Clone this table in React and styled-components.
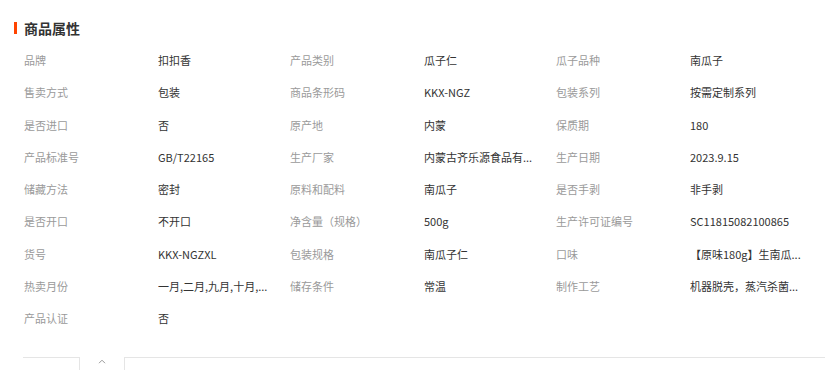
import { Fragment } from 'react';
import styled, { createGlobalStyle } from 'styled-components';

const GlobalStyle = createGlobalStyle`
  body {
    margin: 0;
    background: #fff;
    font-family: "Microsoft YaHei", "Noto Sans CJK SC", sans-serif;
  }
`;

const Section = styled.section`
  width: 825px;
  height: 370px;
  overflow: hidden;
`;

const Header = styled.div`
  display: flex;
  align-items: center;
  height: 24px;
  margin-top: 16px;
  padding-left: 14px;
`;

const Bar = styled.span`
  width: 3px;
  height: 12px;
  background-color: #ff4400;
  margin-right: 7px;
`;

const Title = styled.h3`
  margin: 0;
  font-size: 14px;
  font-weight: 700;
  color: #333;
`;

const Grid = styled.div`
  display: grid;
  grid-template-columns: repeat(3, 134px 132px);
  grid-auto-rows: 32.25px;
  align-items: center;
  margin-top: 4px;
  padding-left: 24px;
  font-size: 11px;
`;

const Label = styled.div`
  color: #9a9a9a;
  white-space: nowrap;
`;

const Value = styled.div`
  color: #333;
  white-space: nowrap;
  overflow: hidden;
`;

const TabBar = styled.div`
  display: flex;
  height: 13px;
  margin-top: 23px;
  padding-left: 23px;
`;

const Line = styled.div`
  border-top: 1px solid #e5e5e5;
  width: ${(p) => (p.$grow ? 'auto' : `${p.$w}px`)};
  flex: ${(p) => (p.$grow ? 1 : 'none')};
`;

const Toggle = styled.div`
  width: 46px;
  border-left: 1px solid #e5e5e5;
  border-right: 1px solid #e5e5e5;
  display: flex;
  justify-content: center;
  padding-top: 2px;
  box-sizing: border-box;
`;

const attrs = [
  ['品牌', '扣扣香'],
  ['产品类别', '瓜子仁'],
  ['瓜子品种', '南瓜子'],
  ['售卖方式', '包装'],
  ['商品条形码', 'KKX-NGZ'],
  ['包装系列', '按需定制系列'],
  ['是否进口', '否'],
  ['原产地', '内蒙'],
  ['保质期', '180'],
  ['产品标准号', 'GB/T22165'],
  ['生产厂家', '内蒙古齐乐源食品有...'],
  ['生产日期', '2023.9.15'],
  ['储藏方法', '密封'],
  ['原料和配料', '南瓜子'],
  ['是否手剥', '非手剥'],
  ['是否开口', '不开口'],
  ['净含量（规格）', '500g'],
  ['生产许可证编号', 'SC11815082100865'],
  ['货号', 'KKX-NGZXL'],
  ['包装规格', '南瓜子仁'],
  ['口味', '【原味180g】生南瓜...'],
  ['热卖月份', '一月,二月,九月,十月,...'],
  ['储存条件', '常温'],
  ['制作工艺', '机器脱壳，蒸汽杀菌...'],
  ['产品认证', '否'],
];

export default function App() {
  return (
    <Section>
      <GlobalStyle />
      <Header>
        <Bar />
        <Title>商品属性</Title>
      </Header>
      <Grid>
        {attrs.map(([k, v]) => (
          <Fragment key={k}>
            <Label>{k}</Label>
            <Value>{v}</Value>
          </Fragment>
        ))}
      </Grid>
      <TabBar>
        <Line $w={56} />
        <Toggle>
          <svg width="8" height="5" viewBox="0 0 8 5">
            <path d="M1 4.2 L4 1.2 L7 4.2" fill="none" stroke="#999" strokeWidth="1" />
          </svg>
        </Toggle>
        <Line $grow />
      </TabBar>
    </Section>
  );
}
